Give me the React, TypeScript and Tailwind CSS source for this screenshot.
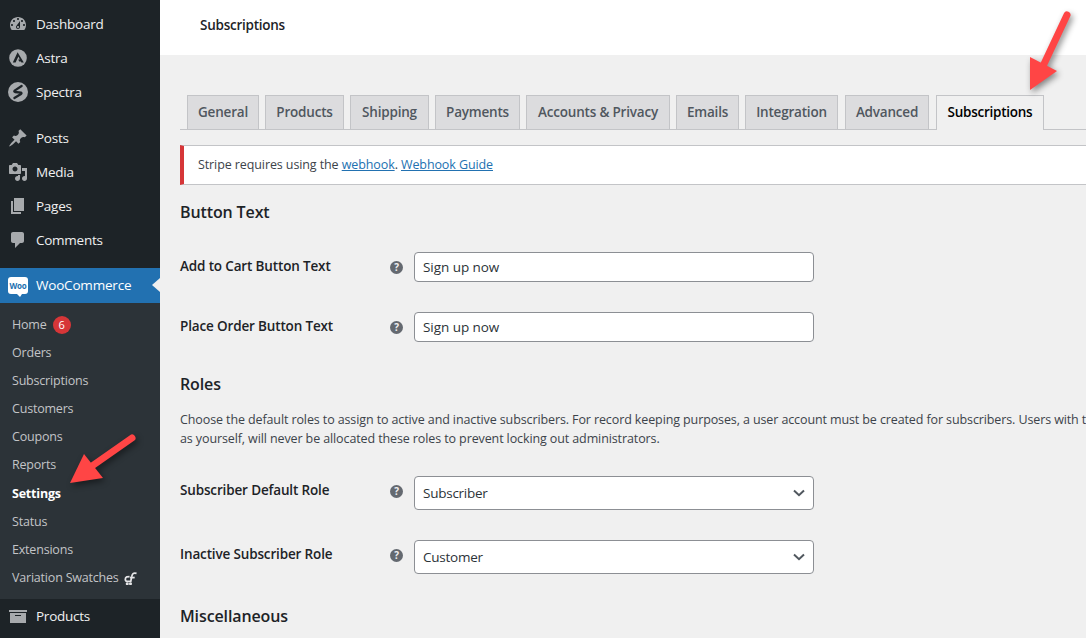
import React from "react";

const font = { fontFamily: '"Open Sans", "Noto Sans", sans-serif' };

const icons: Record<string, React.ReactNode> = {
  dashboard: <path d="M3.76 16h12.48c1.1-1.37 1.76-3.11 1.76-5 0-4.42-3.58-8-8-8s-8 3.58-8 8c0 1.89.66 3.63 1.76 5zM10 4c.55 0 1 .45 1 1s-.45 1-1 1-1-.45-1-1 .45-1 1-1zM6 6c.55 0 1 .45 1 1s-.45 1-1 1-1-.45-1-1 .45-1 1-1zm8 0c.55 0 1 .45 1 1s-.45 1-1 1-1-.45-1-1 .45-1 1-1zm-5.37 5.55L12 7v6c0 1.1-.9 2-2 2s-2-.9-2-2c0-.57.24-1.08.63-1.45zM4 10c.55 0 1 .45 1 1s-.45 1-1 1-1-.45-1-1 .45-1 1-1zm12 0c.55 0 1 .45 1 1s-.45 1-1 1-1-.45-1-1 .45-1 1-1zm-5 3c0-.55-.45-1-1-1s-1 .45-1 1 .45 1 1 1 1-.45 1-1z" fillRule="evenodd" />,
  astra: (
    <>
      <circle cx="10" cy="10" r="8.8" />
      <path d="M9.6 4.2 L4.8 14.6 H7.6 L10.4 8.4 L11.8 11.4 H10.2 L11.2 13.4 H12.8 L13.4 14.6 H15.8 Z" fill="#1d2327" />
    </>
  ),
  spectra: (
    <>
      <circle cx="10" cy="10" r="10" />
      <path d="M13.6 4 L6.6 8.6 Q5.8 9.6 7 10 L13 10.6 Q14 11 13 12 L6.4 16" fill="none" stroke="#1d2327" strokeWidth="2.3" strokeLinecap="round" strokeLinejoin="round" />
    </>
  ),
  post: <path d="M10.44 3.02l1.82-1.82 6.36 6.35-1.83 1.82c-1.05-.68-2.48-.57-3.41.36l-.75.75c-.92.93-1.04 2.35-.35 3.41l-1.83 1.82-2.41-2.41-2.8 2.79c-.42.42-3.38 2.71-3.8 2.29s1.86-3.39 2.28-3.81l2.79-2.79L4.1 9.36l1.83-1.82c1.05.69 2.48.57 3.4-.36l.75-.75c.93-.92 1.05-2.35.36-3.41z" />,
  media: <path d="M13 11V4c0-.55-.45-1-1-1h-1.67L9 1H5L3.67 3H2c-.55 0-1 .45-1 1v7c0 .55.45 1 1 1h10c.55 0 1-.45 1-1zM7 4.5c1.38 0 2.5 1.12 2.5 2.5S8.38 9.5 7 9.5 4.5 8.38 4.5 7 5.62 4.5 7 4.5zM14 6h5v10.5c0 1.38-1.12 2.5-2.5 2.5S14 17.88 14 16.5s1.12-2.5 2.5-2.5c.17 0 .34.02.5.05V9h-3V6zm-4 8.05V13h2v3.5c0 1.38-1.12 2.5-2.5 2.5S7 17.88 7 16.5 8.12 14 9.5 14c.17 0 .34.02.5.05z" />,
  page: <path d="M6 15V2h10v13H6zm-1 1h8v2H3V5h2v11z" />,
  comments: <path d="M5 2h9c1.1 0 2 .9 2 2v7c0 1.1-.9 2-2 2h-2l-5 5v-5H5c-1.1 0-2-.9-2-2V4c0-1.1.9-2 2-2z" />,
  archive: <path d="M19 4v2H1V4h18zM2 7h16v10H2V7zm11 3V9H7v1h6z" fillRule="evenodd" />,
};

function MenuItem({ icon, label, className = "" }: { icon: string; label: string; className?: string }) {
  return (
    <div className={`flex h-[34px] items-center pl-[8px] text-[13.5px] text-[#f0f0f1] ${className}`}>
      <svg viewBox="0 0 20 20" className="h-[20px] w-[20px] fill-[#a7aaad]">{icons[icon]}</svg>
      <span className="ml-[8px] tracking-[-0.25px]">{label}</span>
    </div>
  );
}

const subItems = ["Orders", "Subscriptions", "Customers", "Coupons", "Reports"];

function SubItem({ children, className = "" }: { children: React.ReactNode; className?: string }) {
  return <div className={`flex h-[28px] items-center pl-[12px] text-[12.5px] tracking-[-0.2px] text-[#c3c4c7] ${className}`}>{children}</div>;
}

function Sidebar() {
  return (
    <aside className="flex h-full w-[160px] shrink-0 flex-col bg-[#1d2327] pt-[7px]">
      <MenuItem icon="dashboard" label="Dashboard" />
      <MenuItem icon="astra" label="Astra" />
      <MenuItem icon="spectra" label="Spectra" />
      <MenuItem icon="post" label="Posts" className="mt-[12px]" />
      <MenuItem icon="media" label="Media" />
      <MenuItem icon="page" label="Pages" />
      <MenuItem icon="comments" label="Comments" />
      <div className="relative mt-[11px] flex h-[35px] items-center bg-[#2271b1] pl-[8px] text-[13.5px] tracking-[-0.2px] text-white">
        <div className="relative flex h-[17px] w-[20px] items-center justify-center rounded-[3px] bg-white text-[8px] font-bold leading-none tracking-[-0.2px] text-[#2271b1]">
          Woo
          <span className="absolute bottom-[-3px] left-[9px] h-0 w-0 border-l-[3px] border-r-[2px] border-t-[3px] border-l-transparent border-r-transparent border-t-white" />
        </div>
        <span className="ml-[8px]">WooCommerce</span>
        <span className="absolute right-0 top-[10px] h-0 w-0 border-y-[7px] border-r-[8px] border-y-transparent border-r-[#f0f0f0]" />
      </div>
      <div className="flex flex-col bg-[#2c3338] pb-[7px] pt-[8px]">
        <SubItem>
          Home
          <span className="ml-[6px] flex h-[18px] w-[18px] items-center justify-center rounded-full bg-[#d63638] text-[11px] text-white">6</span>
        </SubItem>
        {subItems.map((s) => (
          <SubItem key={s}>{s}</SubItem>
        ))}
        <SubItem className="mt-[1px] font-bold text-white">Settings</SubItem>
        <SubItem>Status</SubItem>
        <SubItem>Extensions</SubItem>
        <SubItem>
          Variation Swatches
          <svg viewBox="0 0 14 14" className="ml-[5px] h-[13px] w-[13px] fill-none stroke-[#e6e6e8] stroke-[1.9]">
            <path d="M13.5 1.5 C10 0.5 8.8 2 8.3 5 L7.3 10 H3 C1 10 0.8 6 3 5.2 L6 5" />
            <path d="M6.5 6 H11.5" />
            <circle cx="3.5" cy="12.6" r="0.7" fill="#e6e6e8" />
            <circle cx="7" cy="12.6" r="0.7" fill="#e6e6e8" />
          </svg>
        </SubItem>
      </div>
      <MenuItem icon="archive" label="Products" />
    </aside>
  );
}

const tabs: [string, string][] = [
  ["General", "w-[72px]"],
  ["Products", "w-[79px]"],
  ["Shipping", "w-[79px]"],
  ["Payments", "w-[85px]"],
  ["Accounts & Privacy", "w-[144px]"],
  ["Emails", "w-[63px]"],
  ["Integration", "w-[93px]"],
  ["Advanced", "ml-[1px] w-[84px]"],
];

function Help() {
  return (
    <span className="flex h-[13px] w-[13px] items-center justify-center rounded-full bg-[#646970] text-[10px] font-bold leading-none text-[#f0f0f0]">?</span>
  );
}

function Row({ label, children, top, h }: { label: string; children: React.ReactNode; top: string; h: string }) {
  return (
    <div className={`flex items-start ${top}`}>
      <div className={`flex w-[234px] items-center justify-between text-[13.5px] font-semibold tracking-[-0.15px] text-[#1d2327] ${h}`}>
        <span className="pb-[2px]">{label}</span>
        <span className="mr-[11px]"><Help /></span>
      </div>
      <div>{children}</div>
    </div>
  );
}

function TextBox({ value }: { value: string }) {
  return (
    <div className="flex h-[30px] w-[400px] items-center rounded-[4px] border border-[#8c8f94] bg-white pl-[8px] text-[13.5px] tracking-[-0.05px] text-[#2c3338]">{value}</div>
  );
}

function SelectBox({ value }: { value: string }) {
  return (
    <div className="flex h-[34px] w-[400px] items-center justify-between rounded-[4px] border border-[#8c8f94] bg-white pl-[8px] pr-[8px] text-[13.5px] tracking-[-0.25px] text-[#2c3338]">
      {value}
      <svg viewBox="0 0 12 8" className="h-[8px] w-[12px] fill-none stroke-[#50575e] stroke-[2]"><path d="M1 1.5 L6 6.2 L11 1.5" /></svg>
    </div>
  );
}

function Arrow({ className, w, h, shaft, head }: { className: string; w: number; h: number; shaft: string; head: string }) {
  return (
    <svg width={w} height={h} viewBox={`0 0 ${w} ${h}`} className={`absolute ${className} drop-shadow-[2px_3px_3px_rgba(0,0,0,0.45)]`}>
      <path d={shaft} fill="none" stroke="#ff4545" strokeWidth="7" strokeLinecap="round" />
      <polygon points={head} fill="#ff4545" />
    </svg>
  );
}

export default function App() {
  return (
    <div className="relative flex h-[638px] w-[1086px] overflow-hidden bg-[#f0f0f0]" style={font}>
      <Sidebar />
      <main className="min-w-0 flex-1 overflow-hidden">
        <header className="flex h-[55px] items-center bg-white pb-[4px] pl-[40px] text-[13.5px] font-semibold tracking-[-0.25px] text-[#1d2327]">Subscriptions</header>
        <div className="pl-[20px]">
          <nav className="mt-[40px] flex h-[35px] gap-[6px] border-b border-[#c3c4c7] pl-[7px]">
            {tabs.map(([t, w]) => (
              <div key={t} className={`flex h-[35px] items-center justify-center whitespace-nowrap border border-[#c3c4c7] bg-[#dcdcde] text-[13.5px] font-semibold tracking-[-0.2px] text-[#50575e] ${w}`}>{t}</div>
            ))}
            <div className="ml-[1px] flex h-[35px] w-[108px] items-center justify-center border border-b-0 border-[#c3c4c7] bg-[#f0f0f0] pb-[1px] text-[13.5px] font-semibold tracking-[-0.25px] text-black">Subscriptions</div>
          </nav>
          <div className="mt-[15px] flex h-[40px] items-center border-y border-r-0 border-y-[#c3c4c7] border-l-[4px] border-l-[#d63638] bg-white pl-[14px] pt-[1px] text-[12.5px] tracking-[-0.1px] text-[#3c434a]">
            <span>Stripe requires using the <span className="text-[#2271b1] underline">webhook</span>. <span className="text-[#2271b1] underline">Webhook Guide</span></span>
          </div>
          <h2 className="mt-[17px] text-[16px] font-semibold leading-[20px] tracking-[-0.12px] text-[#1d2327]">Button Text</h2>
          <Row label="Add to Cart Button Text" top="mt-[30px]" h="h-[30px]"><TextBox value="Sign up now" /></Row>
          <Row label="Place Order Button Text" top="mt-[30px]" h="h-[30px]"><TextBox value="Sign up now" /></Row>
          <h2 className="mt-[32px] text-[16px] font-semibold leading-[20px] tracking-[-0.12px] text-[#1d2327]">Roles</h2>
          <div className="mt-[16px] whitespace-nowrap text-[12.5px] leading-[19px] tracking-[-0.11px] text-[#3c434a]">
            <div>Choose the default roles to assign to active and inactive subscribers. For record keeping purposes, a user account must be created for subscribers. Users with t</div>
            <div>as yourself, will never be allocated these roles to prevent locking out administrators.</div>
          </div>
          <Row label="Subscriber Default Role" top="mt-[28px]" h="h-[30px]"><SelectBox value="Subscriber" /></Row>
          <Row label="Inactive Subscriber Role" top="mt-[30px]" h="h-[30px]"><SelectBox value="Customer" /></Row>
          <h2 className="mt-[32px] text-[16px] font-semibold leading-[20px] tracking-[-0.12px] text-[#1d2327]">Miscellaneous</h2>
        </div>
      </main>
      <Arrow className="left-[60px] top-[430px]" w={80} h={60} shaft="M72 8 L32 36" head="10,53 24,24 43,48" />
      <Arrow className="left-[1020px] top-[8px]" w={56} h={90} shaft="M47 7 L24 56" head="10,82 10,49 37,63" />
    </div>
  );
}
